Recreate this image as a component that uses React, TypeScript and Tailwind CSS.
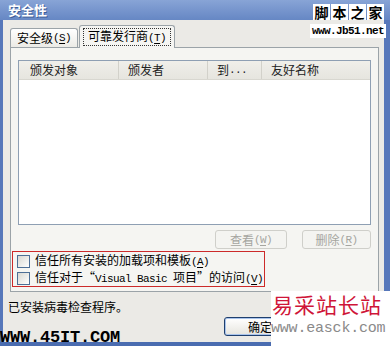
import React from "react";

const mono = "font-['Liberation_Mono',monospace] text-[11px] tracking-[-0.6px]";

function Acc({ k }: { k: string }) {
  return (
    <span className={mono}>
      (<span className="underline underline-offset-[2px]">{k}</span>)
    </span>
  );
}

function CheckBox() {
  return (
    <div className="w-[13px] h-[13px] shrink-0 border border-[#4d6f96] bg-linear-to-br from-[#d8d8d2] to-white" />
  );
}

export default function App() {
  return (
    <div className="relative w-[390px] h-[346px] overflow-hidden bg-[#5b7bbd] font-['Noto_Sans_CJK_SC',sans-serif] text-[12px] leading-[14px] text-black">
      <div className="flex flex-col h-full">
        {/* title bar */}
        <div className="h-[20px] shrink-0 flex items-center pl-[8px] bg-linear-to-b from-[#88a4d6] to-[#6687c4] text-white font-bold text-[13px] [text-shadow:1px_1px_0_#3d5c96]">
          安全性
        </div>
        <div className="flex flex-1 min-h-0">
          <div className="w-[3px] bg-[#5677ba]" />
          <div className="flex-1 bg-[#ebeae6] flex flex-col">
            {/* tabs */}
            <div className="flex items-end pl-[7px] pt-[5px] h-[27px] shrink-0">
              <div className="h-[19px] px-[6px] border border-b-0 border-[#9ba3a8] rounded-t-[3px] bg-linear-to-b from-white to-[#ecebe6] flex items-center">
                安全级<Acc k="S" />
              </div>
              <div className="relative z-10 -mb-px h-[23px] ml-[1px] px-[3px] border border-b-0 border-[#9ba3a8] rounded-t-[3px] bg-[#f5f5f2] flex items-center">
                <span className="border border-dotted border-[#333] px-[4px] leading-[13px]">
                  可靠发行商<Acc k="T" />
                </span>
              </div>
            </div>
            {/* panel */}
            <div className="ml-[7px] mr-[5px] h-[245px] shrink-0 border border-[#9ba3a8] bg-[#f5f5f2] flex flex-col">
              <div className="ml-[7px] mt-[12px] w-[353px] h-[165px] border border-[#8e9fb3] bg-white flex flex-col">
                <div className="h-[19px] flex items-center bg-linear-to-b from-[#f0efea] to-[#e6e5df] border-b border-[#d8d7d0] text-[#222]">
                  <div className="w-[100px] pl-[11px] h-full flex items-center border-r border-[#d2d1ca]">颁发对象</div>
                  <div className="w-[89px] pl-[9px] h-full flex items-center border-r border-[#d2d1ca]">颁发者</div>
                  <div className="w-[54px] pl-[9px] h-full flex items-center border-r border-[#d2d1ca]">
                    到<span className={mono}>...</span>
                  </div>
                  <div className="flex-1 pl-[9px] h-full flex items-center">友好名称</div>
                </div>
              </div>
              <div className="flex justify-end gap-[15px] mt-[5px] mr-[7px] text-[#a5a5a0]">
                <div className="w-[72px] h-[19px] border border-[#cfcfca] rounded-[3px] bg-[#f4f4f1] flex items-center justify-center">
                  查看<Acc k="W" />
                </div>
                <div className="w-[69px] h-[19px] border border-[#cfcfca] rounded-[3px] bg-[#f4f4f1] flex items-center justify-center">
                  删除<Acc k="R" />
                </div>
              </div>
              <div className="ml-[1px] mt-[2px] w-[253px] h-[36px] border border-[#cc2a2a] pl-[4px] pt-[1px] flex flex-col gap-[1px]">
                <div className="h-[16px] flex items-center gap-[5px]">
                  <CheckBox />
                  <span>
                    信任所有安装的加载项和模板<Acc k="A" />
                  </span>
                </div>
                <div className="h-[16px] flex items-center gap-[5px]">
                  <CheckBox />
                  <span className="whitespace-nowrap">
                    信任对于“<span className={mono}>Visual Basic </span>项目”的访问<Acc k="V" />
                  </span>
                </div>
              </div>
            </div>
            <div className="ml-[5px] mt-[8px] h-[14px] shrink-0">已安装病毒检查程序。</div>
            <div className="flex mt-[3px] ml-[221px] gap-[6px] shrink-0">
              <div className="w-[75px] h-[19px] border border-[#1f3f6e] rounded-[3px] bg-linear-to-b from-white to-[#e6e5de] shadow-[inset_0_0_0_1px_#a9c4ec] flex items-center pl-[23px]">
                确定
              </div>
              <div className="w-[75px] h-[19px] border border-[#1f3f6e] rounded-[3px] bg-linear-to-b from-white to-[#e6e5de]" />
            </div>
            <div className="flex-1" />
          </div>
          <div className="w-[6px] bg-[#5677ba]" />
        </div>
        <div className="h-[4px] shrink-0 bg-[#4a6cb0]" />
      </div>

      {/* watermarks */}
      <div className="absolute left-[313px] top-[4px] flex gap-[1px]">
        {["脚", "本", "之", "家"].map((c) => (
          <div key={c} className="w-[17px] h-[16px] bg-white flex items-center justify-center font-bold text-[14px] leading-none">
            {c}
          </div>
        ))}
      </div>
      <div className="absolute left-[310px] top-[24px] w-[76px] h-[14px] bg-white flex items-center pl-[2px] font-['Liberation_Mono',monospace] text-[11px] tracking-[-0.6px] font-bold">
        www.Jb51.net
      </div>
      <div className="absolute left-0 top-[329px] font-['Liberation_Mono',monospace] font-bold text-[17px] leading-[17px] tracking-[-0.2px]">
        WWW.45IT.COM
      </div>
      <div className="absolute left-[271px] top-[291px] w-[119px] h-[55px] bg-white flex flex-col">
        <div className="pl-[1px] whitespace-nowrap text-[21px] leading-[27px] tracking-[1px] text-[#cf1538]">易采站长站</div>
        <div className="mt-[2px] whitespace-nowrap font-['Liberation_Mono',monospace] text-[15px] leading-[17px] tracking-[-0.2px] text-[#8a8a8a]">
          www.easck.com
        </div>
      </div>
    </div>
  );
}
